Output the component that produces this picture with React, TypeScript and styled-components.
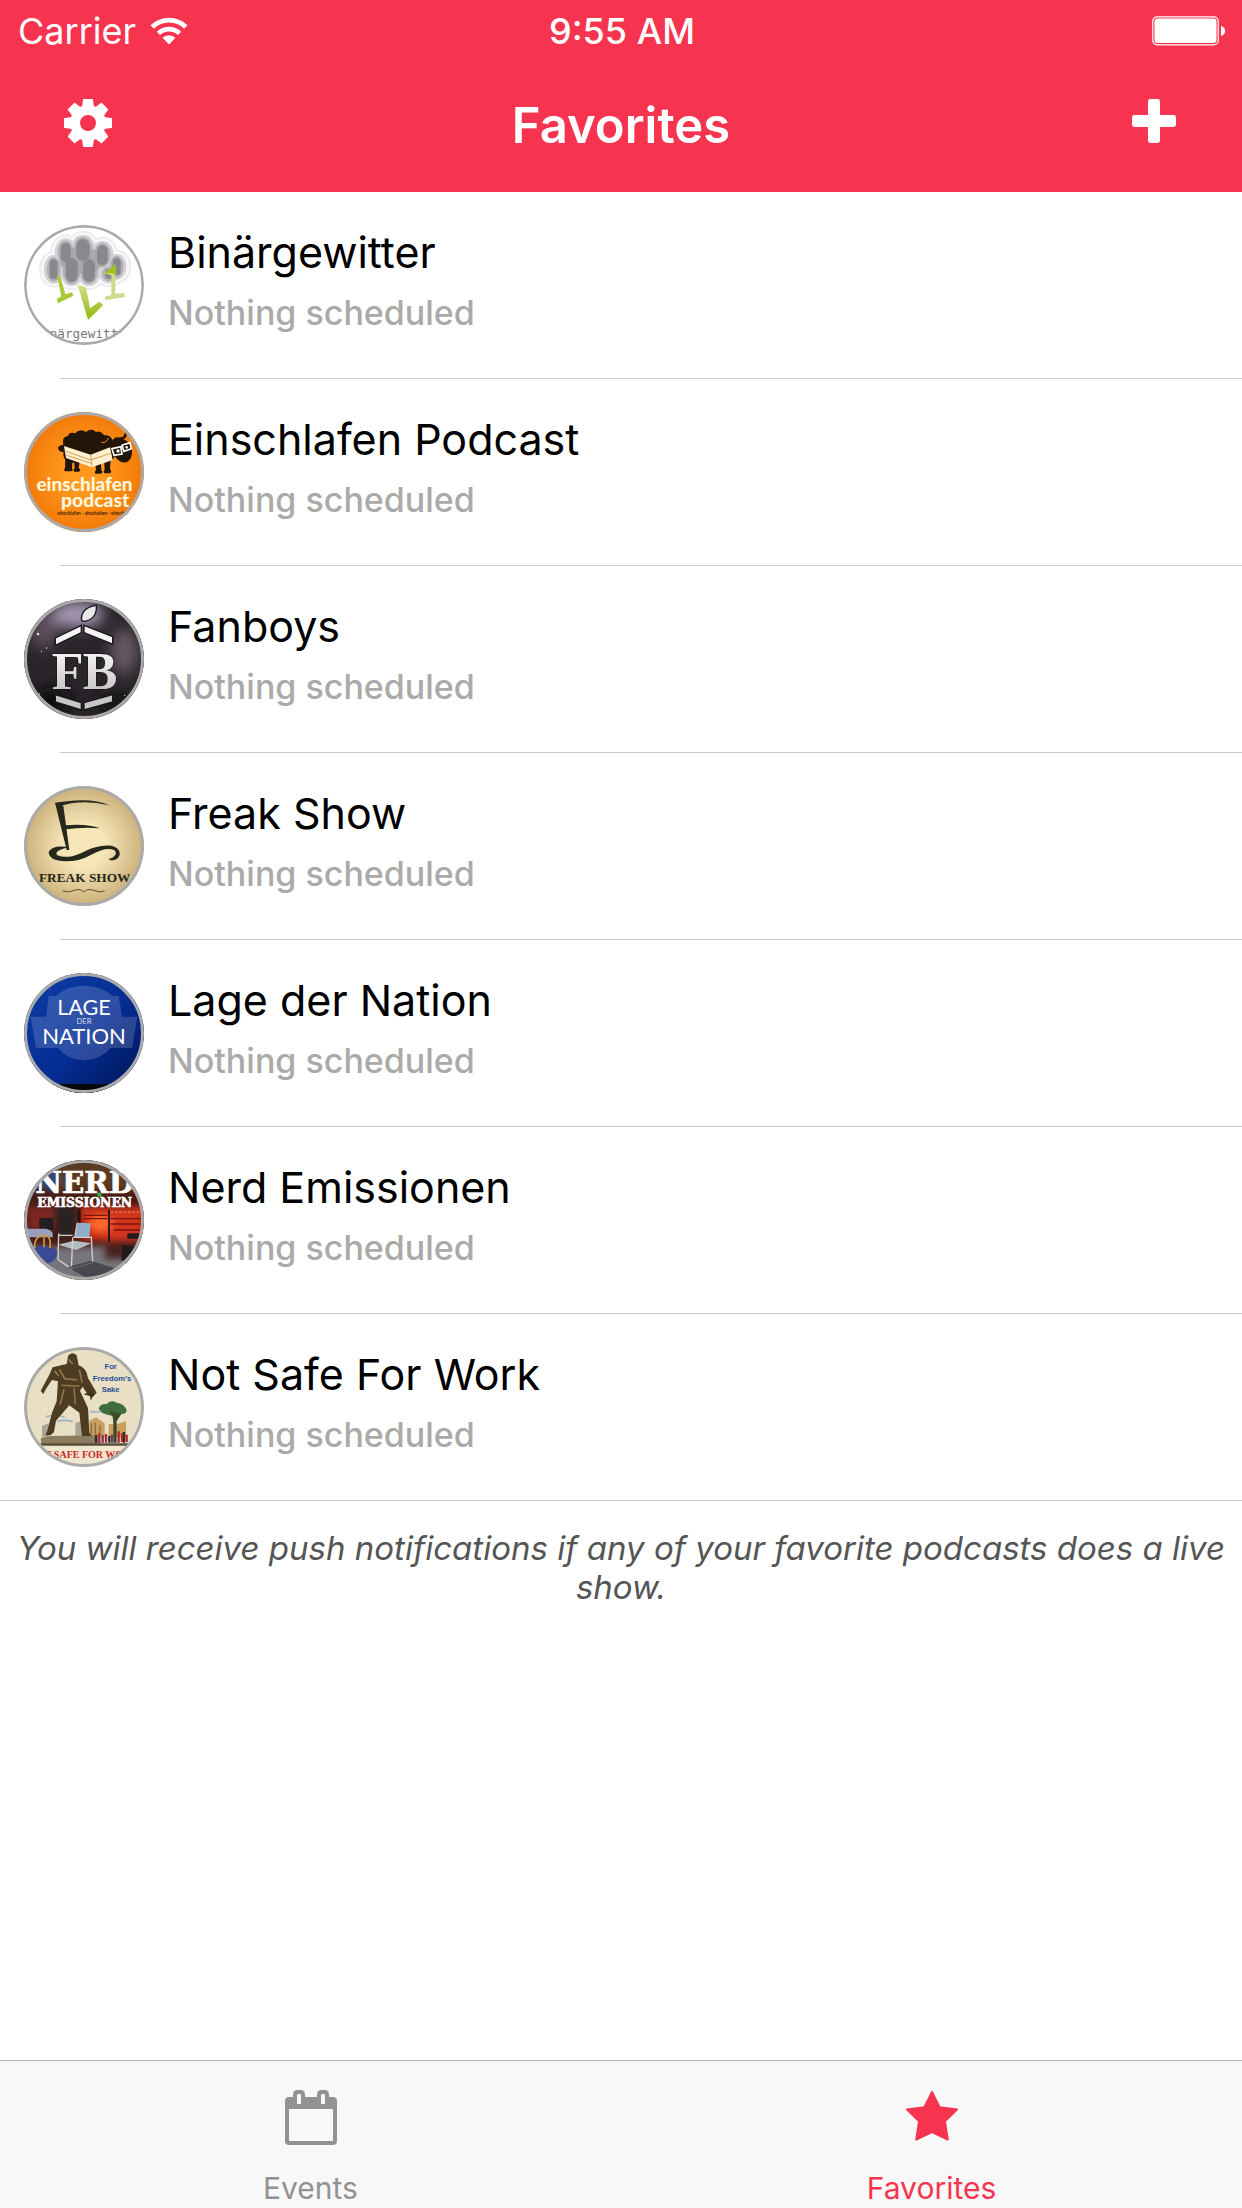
import React from "react";
import styled, { createGlobalStyle } from "styled-components";

const RED = "#f6344f";

const GlobalStyle = createGlobalStyle`
  *, *::before, *::after { box-sizing: border-box; }
  body {
    margin: 0;
    background: #ffffff;
    color: #000000;
    font-family: Inter, "Liberation Sans", sans-serif;
  }
`;

const Screen = styled.div`
  display: flex;
  flex-direction: column;
  min-height: 100vh;
`;

const Header = styled.header`
  background: ${RED};
  color: #ffffff;
`;

const StatusBar = styled.div`
  display: grid;
  grid-template-columns: 1fr auto 1fr;
  align-items: center;
  height: 60px;
  padding: 2px 16px 0 18px;
  font-size: 36px;
  line-height: 44px;
`;

const Carrier = styled.div`
  display: flex;
  align-items: center;
  gap: 14px;
`;

const Clock = styled.time`
  font-weight: 500;
`;

const BatterySlot = styled.div`
  display: flex;
  justify-content: flex-end;
`;

const NavBar = styled.div`
  display: flex;
  align-items: center;
  justify-content: space-between;
  height: 132px;
  padding: 0 52px 6px;
`;

const Title = styled.h1`
  margin: 0;
  padding-top: 6px;
  font-size: 49px;
  line-height: 60px;
  font-weight: 600;
`;

const IconButton = styled.button`
  display: flex;
  align-items: center;
  justify-content: center;
  width: 72px;
  height: 72px;
  padding: 0;
  border: 0;
  background: none;
  color: inherit;
  cursor: pointer;
`;

const Main = styled.main`
  flex: 1;
`;

const List = styled.ul`
  margin: 0;
  padding: 0;
  list-style: none;
  border-bottom: 1px solid #c8c7cc;
`;

const Row = styled.li`
  & + &::before {
    content: "";
    display: block;
    height: 1px;
    margin-left: 60px;
    background: #c8c7cc;
  }
`;

const RowBody = styled.div`
  display: flex;
  gap: 24px;
  padding: 33px 24px;
`;

const Avatar = styled.div`
  flex: none;
  width: 120px;
  height: 120px;
  border-radius: 50%;
  overflow: hidden;

  svg { display: block; width: 100%; height: 100%; }
`;

const RowText = styled.div`
  display: flex;
  flex-direction: column;
  gap: 12px;
`;

const Name = styled.h2`
  margin: 0;
  font-size: 43px;
  line-height: 54px;
  font-weight: 400;
`;

const Schedule = styled.p`
  margin: 0;
  color: #aaaaaa;
  font-size: 34px;
  line-height: 44px;
  font-weight: 500;
`;

const Note = styled.p`
  margin: 0;
  padding: 28px 8px;
  color: #555555;
  font-size: 33px;
  line-height: 39px;
  font-style: italic;
  text-align: center;
`;

const TabBar = styled.nav`
  display: grid;
  grid-template-columns: 1fr 1fr;
  height: 148px;
  border-top: 1px solid #b2b2b2;
  background: #f8f8f8;
`;

const Tab = styled.a<{ $active?: boolean }>`
  display: flex;
  flex-direction: column;
  align-items: center;
  gap: 24px;
  padding-top: 28px;
  color: ${(p) => (p.$active ? RED : "#929292")};
  font-size: 30px;
  line-height: 36px;
  text-decoration: none;
`;

const WifiIcon = () => (
  <svg width="38" height="28" viewBox="0 0 38 28" aria-hidden="true">
    <g fill="none" stroke="currentColor" strokeWidth="4.6">
      <path d="M2.2 10 A24 24 0 0 1 35.8 10" />
      <path d="M8.4 16.4 A15.4 15.4 0 0 1 29.6 16.4" />
    </g>
    <path d="M12.6 20.8 A9.2 9.2 0 0 1 25.4 20.8 L19 27.4 Z" fill="currentColor" />
  </svg>
);

const BatteryIcon = () => (
  <svg width="74" height="30" viewBox="0 0 74 30" aria-hidden="true">
    <rect x="0.8" y="0.8" width="65.4" height="28" rx="4.4" fill="none" stroke="#fff" strokeWidth="1.2" />
    <rect x="2.5" y="2.5" width="62" height="24.6" rx="3" fill="#fff" />
    <path d="M69 10 Q73 11 73 15 Q73 19 69 20 Z" fill="#fff" />
  </svg>
);

const GearIcon = () => (
  <svg width="48" height="48" viewBox="-24 -24 48 48" aria-hidden="true">
    <circle r="12.5" fill="none" stroke="currentColor" strokeWidth="9" />
    {[0, 45, 90, 135, 180, 225, 270, 315].map((a) => (
      <path
        key={a}
        transform={`rotate(${a})`}
        d="M-4.2 -24 H4.2 Q4.9 -24 5 -23.2 L5.8 -17.6 Q6.2 -16.6 7.4 -15.6 L4 -12 H-4 L-7.4 -15.6 Q-6.2 -16.6 -5.8 -17.6 L-5 -23.2 Q-4.9 -24 -4.2 -24 Z"
        fill="currentColor"
      />
    ))}
  </svg>
);

const PlusIcon = () => (
  <svg width="44" height="48" viewBox="0 0 44 48" aria-hidden="true">
    <rect x="16" width="12" height="44" rx="2.4" fill="currentColor" />
    <rect y="16" width="44" height="12" rx="2.4" fill="currentColor" />
  </svg>
);

const CalendarIcon = () => (
  <svg width="52" height="57" viewBox="0 0 52 57" aria-hidden="true">
    <path
      fill="currentColor"
      fillRule="evenodd"
      d="M4 8 H8 V6 Q8 1 12.500 1 H15.500 Q20 1 20 6 V8 H32 V6 Q32 1 36.500 1 H39.500 Q44 1 44 6 V8 H48 Q52 8 52 12 V52 Q52 56 48 56 H4 Q0 56 0 52 V12 Q0 8 4 8 Z M4 20 V52 H48 V20 Z M12 6 V14.500 Q12 15 12.500 15 H15.500 Q16 15 16 14.500 V6 Q16 5 15 5 H13 Q12 5 12 6 Z M36 6 V14.500 Q36 15 36.500 15 H39.500 Q40 15 40 14.500 V6 Q40 5 39 5 H37 Q36 5 36 6 Z"
    />
  </svg>
);

const StarIcon = () => (
  <svg width="52" height="57" viewBox="0 0 52 57" aria-hidden="true">
    <path
      d="M26 3 L33.600 18.200 L51 20.600 L38.900 32.400 L41.800 50.500 L26 43 L10.200 50.500 L13.100 32.400 L1 20.600 L18.400 18.200 Z"
      fill="currentColor"
      stroke="currentColor"
      strokeWidth="2"
      strokeLinejoin="round"
    />
  </svg>
);

const Ring = () => <circle cx="210" cy="210" r="175.500" fill="none" stroke="#aaaaaa" strokeWidth="9" />;

const PILLS = [
  [89, 133, 12, 30], [278, 125, 12, 26], [255, 147, 12, 15], [125, 82, 15, 29],
  [235, 90, 16, 30], [177, 75, 20, 33], [143, 135, 18, 36], [195, 137, 18, 34],
];

const StormCover = () => (
  <svg viewBox="0 0 360 360" aria-hidden="true">
    <defs>
      <linearGradient id="bolt" x1="0" y1="0" x2="0" y2="1">
        <stop offset="0" stopColor="#cfe08a" />
        <stop offset="1" stopColor="#8fb80c" />
      </linearGradient>
    </defs>
    <rect width="360" height="360" fill="#fff" />
    {PILLS.map(([x, y, rx, ry]) => (
      <ellipse key={`h${x}`} cx={x} cy={y} rx={rx + 32} ry={ry + 25} fill="#ededf0" />
    ))}
    {PILLS.map(([x, y, rx, ry]) => (
      <ellipse key={`w${x}`} cx={x} cy={y} rx={rx + 25} ry={ry + 19} fill="#fafafb" />
    ))}
    {PILLS.map(([x, y, rx, ry]) => (
      <ellipse key={`g${x}`} cx={x} cy={y} rx={rx + 18} ry={ry + 13} fill="#d3d3d7" />
    ))}
    {PILLS.map(([x, y, rx, ry]) => (
      <ellipse key={`m${x}`} cx={x} cy={y} rx={rx + 9} ry={ry + 7} fill="#b2b2b6" />
    ))}
    <ellipse cx="172" cy="106" rx="66" ry="40" fill="#a4a4a8" fillOpacity="0.8" />
    {PILLS.map(([x, y, rx, ry]) => (
      <rect key={`c${x}`} x={x - rx} y={y - ry} width={rx * 2} height={ry * 2} rx={rx} fill="#88888d" />
    ))}
    <path d="M98 148 L110 158 L124 208 L144 202 L148 212 L102 235 L98 222 L112 214 Z" fill="#a6c936" />
    <path d="M161 180 L186 187 L198 250 L226 230 L238 240 L192 285 Z" fill="url(#bolt)" />
    <path d="M274 118 V206 L300 204 L304 216 L244 226 L242 215 L262 210 L262 150 L240 146 Z" fill="#cadd8e" />
    <path d="M274 118 L276 150 L264 144 L240 146 Z" fill="#9cc41c" />
    <text x="180" y="340" textAnchor="middle" fontFamily="DejaVu Sans Mono, monospace" fontSize="38" fill="#77777b">Binärgewitter</text>
    <circle cx="180" cy="180" r="176" fill="none" stroke="#aaaaaa" strokeWidth="8" />
  </svg>
);

const SheepCover = () => (
  <svg viewBox="30 30 360 360" aria-hidden="true">
    <defs>
      <radialGradient id="orange">
        <stop offset="0.3" stopColor="#ff9a1e" />
        <stop offset="1" stopColor="#f37a08" />
      </radialGradient>
    </defs>
    <rect x="30" y="30" width="360" height="360" fill="url(#orange)" />
    <g fill="#241509">
      <path d="M148 128 Q142 104 162 102 Q166 88 184 94 Q198 78 216 90 Q232 76 246 90 Q260 84 270 100 Q290 98 296 116 L306 150 Q304 176 276 182 H168 Q146 174 148 150 Q132 150 132 136 Q138 128 148 128 Z" />
      <path d="M154 160 H176 L174 198 Q180 208 170 208 H154 Q147 204 153 198 Z M180 170 H198 L194 198 Q204 206 194 209 H180 Q176 204 182 198 Z M242 170 H260 L262 204 Q270 214 258 215 H244 Q240 210 246 204 Z M270 170 H290 L288 202 Q296 212 286 214 H272 Q266 210 272 204 Z" />
      <path d="M296 112 Q318 104 340 118 L354 140 Q356 172 338 181 Q316 184 304 164 L288 134 Z" />
    </g>
    <path d="M306 110 Q334 112 334 98 M292 128 Q264 138 260 118 Q264 102 282 106" fill="none" stroke="#241509" strokeWidth="8" strokeLinecap="round" />
    <path d="M262 120 Q272 128 284 108" fill="none" stroke="#f4931f" strokeWidth="3" />
    <path d="M150 132 L230 158 L288 136 L296 174 L234 196 L156 168 Z" fill="#fff0cf" />
    <path d="M230 158 L234 194 M156 148 L230 174 L290 154 M158 160 L232 184" fill="none" stroke="#d99a55" strokeWidth="3" />
    <path d="M294 140 L320 134 L324 156 L300 160 Z M324 130 L348 122 L352 140 L330 148 Z" fill="#241509" stroke="#fff" strokeWidth="5" />
    <circle cx="312" cy="147" r="5" fill="#fff" />
    <circle cx="338" cy="136" r="4" fill="#fff" />
    <g fontFamily="Lato, sans-serif" fontWeight="900" fill="#fff6dc" textAnchor="end">
      <text x="356" y="268" fontSize="57">einschlafen</text>
      <text x="346" y="314" fontSize="58">podcast</text>
    </g>
    <text x="130" y="338" fontFamily="Lato, sans-serif" fontWeight="700" fontSize="14" fill="#4a2608">einschlafen - abschalten - einschlafen</text>
    <Ring />
  </svg>
);

const NebulaCover = () => (
  <svg viewBox="30 33 360 360" aria-hidden="true">
    <defs>
      <filter id="mist" x="-50%" y="-50%" width="200%" height="200%">
        <feGaussianBlur stdDeviation="20" />
      </filter>
      <linearGradient id="steel" x1="0" y1="0" x2="0" y2="1">
        <stop offset="0" stopColor="#ffffff" />
        <stop offset="1" stopColor="#bcbcbc" />
      </linearGradient>
    </defs>
    <rect x="30" y="30" width="360" height="363" fill="#2b252b" />
    <g filter="url(#mist)">
      <ellipse cx="190" cy="80" rx="80" ry="40" fill="#a397b0" />
      <ellipse cx="90" cy="130" rx="40" ry="50" fill="#5d505c" />
      <ellipse cx="330" cy="190" rx="40" ry="70" fill="#665964" />
      <ellipse cx="110" cy="340" rx="70" ry="40" fill="#0e0c10" />
      <ellipse cx="310" cy="350" rx="70" ry="40" fill="#151218" />
    </g>
    <path d="M203 98 Q198 60 247 52 Q250 92 212 100 Z" fill="#e9e9e9" stroke="#17151a" strokeWidth="4" />
    <path d="M124 150 L202 112 V134 L124 172 Z M210 112 L296 146 V168 L210 134 Z" fill="#f4f4f4" stroke="#17151a" strokeWidth="4" />
    <path d="M124 342 L202 366 V344 L124 320 Z M210 366 L296 342 V320 L210 344 Z" fill="#c6c6c6" stroke="#17151a" strokeWidth="4" />
    <g fontFamily="Liberation Serif, serif" fontWeight="700" fill="url(#steel)" stroke="#17151a" strokeWidth="4" paintOrder="stroke" textAnchor="middle">
      <text x="161" y="302" fontSize="156">F</text>
      <text x="258" y="302" fontSize="156">B</text>
    </g>
    <g fill="#e6dde4">
      <circle cx="72" cy="138" r="4" />
      <circle cx="82" cy="190" r="2" />
      <circle cx="98" cy="180" r="2" />
      <circle cx="76" cy="318" r="2" />
      <circle cx="332" cy="322" r="2" />
    </g>
    <circle cx="210" cy="213" r="175.500" fill="none" stroke="#aaaaaa" strokeWidth="9" />
  </svg>
);

const HatCover = () => (
  <svg viewBox="30 30 360 360" aria-hidden="true">
    <defs>
      <radialGradient id="parchment">
        <stop offset="0.35" stopColor="#f7e6b9" />
        <stop offset="1" stopColor="#cbb079" />
      </radialGradient>
    </defs>
    <rect x="30" y="30" width="360" height="360" fill="url(#parchment)" />
    <g fill="#25281a">
      <path d="M123 80 L134 92 Q200 68 286 88 Q236 66 160 76 Q136 78 123 80 Z" />
      <path d="M123 80 L148 90 L166 222 L158 222 Z" />
      <path d="M154 148 Q220 142 258 157 Q208 152 156 160 Z" />
      <path d="M156 212 Q112 208 104 228 Q104 254 156 256 Q196 256 232 236 Q276 212 300 222 Q314 232 294 246 L284 248 Q288 256 302 252 Q322 244 316 226 Q306 204 262 210 Q234 214 204 230 Q160 250 130 238 Q118 226 156 216 Z" />
    </g>
    <text x="212" y="318" textAnchor="middle" fontFamily="Liberation Serif, serif" fontWeight="700" fontSize="40" fill="#25281a">FREAK SHOW</text>
    <path d="M146 345 Q164 352 184 342 Q200 338 209 348 Q218 338 236 342 Q256 352 272 345" fill="none" stroke="#5d5034" strokeWidth="3" />
    <Ring />
  </svg>
);

const NationCover = () => (
  <svg viewBox="30 33 360 360" aria-hidden="true">
    <defs>
      <linearGradient id="navy" x1="0" y1="0" x2="1" y2="1">
        <stop offset="0" stopColor="#0d3fa6" />
        <stop offset="0.55" stopColor="#052c92" />
        <stop offset="1" stopColor="#001450" />
      </linearGradient>
    </defs>
    <rect x="30" y="30" width="360" height="363" fill="url(#navy)" />
    <path d="M104 102 H126 Q160 70 210 71 Q260 70 296 102 H314 L324 164 H370 L354 258 H290 Q260 294 210 295 Q160 294 132 258 H66 L50 164 H96 Z" fill="#fff" fillOpacity="0.16" />
    <g fontFamily="Lato, sans-serif" fill="#fff" textAnchor="middle">
      <text x="210" y="159" fontSize="65">LAGE</text>
      <text x="210" y="185" fontSize="23" fillOpacity="0.8">DER</text>
      <text x="210" y="245" fontSize="66">NATION</text>
    </g>
    <rect x="30" y="366" width="360" height="30" fill="#06070c" />
    <circle cx="210" cy="213" r="175.500" fill="none" stroke="#aaaaaa" strokeWidth="9" />
  </svg>
);

const BarCover = () => (
  <svg viewBox="30 30 360 360" aria-hidden="true">
    <defs>
      <filter id="glow" x="-50%" y="-50%" width="200%" height="200%">
        <feGaussianBlur stdDeviation="9" />
      </filter>
    </defs>
    <rect x="30" y="30" width="360" height="360" fill="#4a1c16" />
    <g filter="url(#glow)">
      <path d="M30 30 H390 V120 H30 Z" fill="#5a3a22" />
      <ellipse cx="90" cy="90" rx="50" ry="30" fill="#2f4a74" />
      <path d="M200 170 H390 V270 H200 Z" fill="#d2351a" />
      <ellipse cx="262" cy="220" rx="34" ry="24" fill="#ff6a2c" />
      <path d="M40 170 H130 V240 H40 Z" fill="#7c2620" />
      <path d="M120 170 H190 V260 H120 Z" fill="#2a2322" />
      <path d="M30 290 H330 L370 390 H30 Z" fill="#77757c" />
      <path d="M270 270 H390 V330 H270 Z" fill="#4c241c" />
    </g>
    <path d="M76 204 H118 V240 H76 Z" fill="#241c20" />
    <path d="M190 176 H200 V240 H190 Z M282 180 H288 V276 H282 Z" fill="#2a1512" />
    <path d="M208 196 H280 M208 206 H380 M290 222 H384 M300 240 H384" stroke="#7a140c" strokeWidth="4" />
    <path d="M290 186 H384" stroke="#ff8a50" strokeWidth="3" strokeDasharray="8 5" />
    <path d="M40 236 H96 Q122 242 116 262 H42 Z" fill="#97a0bd" />
    <path d="M36 290 Q100 280 132 302 Q130 338 92 342 L56 330 Z" fill="#3c4a94" />
    <path d="M90 262 V292 M62 294 Q60 254 96 256 Q112 262 108 294" fill="none" stroke="#c99b50" strokeWidth="5" />
    <path d="M192 218 L230 220 L226 262 L182 264 Z" fill="#8fb0c8" />
    <path d="M132 284 L180 272 L232 280 L186 300 Z" fill="#b4bfc4" />
    <path d="M134 250 L132 330 M134 256 H176 M176 264 L172 358 M176 262 H232 L236 338 M190 218 L182 264 M134 330 L172 356 L236 338" fill="none" stroke="#d3d2cc" strokeWidth="4" />
    <path d="M326 284 L366 290 L340 340 L322 330 Z M340 250 H378 V266 H340 Z" fill="#221a1c" />
    <path d="M160 352 L230 332 L320 360 L220 384 Z" fill="#35343a" fillOpacity="0.7" />
    <circle cx="256" cy="134" r="7" fill="#3da83c" />
    <g fontFamily="DejaVu Serif, serif" fontWeight="700" fill="#fff" stroke="#fff" strokeWidth="2" textAnchor="middle">
      <text x="212" y="130" fontSize="88">NERD</text>
      <text x="212" y="172" fontSize="37">EMISSIONEN</text>
    </g>
    <Ring />
  </svg>
);

const StatueCover = () => (
  <svg viewBox="30 33 360 360" aria-hidden="true">
    <rect x="30" y="30" width="360" height="363" fill="#e9dfc4" />
    <path d="M96 242 Q130 234 152 244 M130 256 Q150 250 176 256 M228 226 Q250 230 262 226" fill="none" stroke="#9db4c0" strokeWidth="5" />
    <path d="M84 270 L104 262 V302 H84 Z M184 262 L206 252 V300 H184 Z" fill="#a9a493" />
    <path d="M226 254 L246 244 L272 262 V304 H226 Z M284 264 H310 L336 256 V304 H284 Z" fill="#c99f5f" />
    <path d="M232 262 V294 M244 260 V294 M258 268 V294" stroke="#8a6a40" strokeWidth="4" />
    <path d="M80 306 L110 300 L250 298 L262 324 H82 Z" fill="#8b7c5e" />
    <path d="M80 322 H342 V329 H80 Z" fill="#56503e" />
    <path d="M162 60 Q174 44 188 58 L194 88 Q218 96 222 126 L248 170 L236 184 L222 178 L206 152 L198 164 L222 216 L226 290 L234 300 H204 L196 230 L166 208 L126 254 L120 288 L110 298 H94 L100 284 L114 230 L128 196 L132 136 L114 132 L96 158 L88 174 L80 164 L106 116 L116 94 L158 84 Z" fill="#4d3c22" />
    <path d="M136 100 L152 128 L190 132 M142 148 L196 150 M150 160 L138 206 M180 156 L184 204 M122 104 L134 120 M196 100 L204 140 M164 70 L176 84" fill="none" stroke="#8f7748" strokeWidth="5" />
    <path d="M212 174 L238 178 M228 166 L232 190" stroke="#3a2c18" strokeWidth="5" />
    <path d="M254 218 Q258 202 278 204 Q290 190 308 200 Q330 202 338 222 Q338 236 318 234 L306 244 Q296 240 286 238 L266 232 Z" fill="#3f6b3d" />
    <path d="M286 226 Q298 236 298 262 V320 H308 V256 L322 234" fill="#3d4a28" />
    <g strokeWidth="7" fill="none">
      <path d="M246 296 V320 M286 300 V320 M330 288 V320" stroke="#2c2c38" />
      <path d="M256 292 V320 M276 294 V320 M314 286 V320 M324 292 V318 M338 296 V318" stroke="#b3262b" />
      <path d="M266 298 V320 M294 296 V320" stroke="#5e3f63" />
    </g>
    <g fontFamily="Liberation Sans, sans-serif" fontWeight="700" fontSize="23" fill="#1d4f96" textAnchor="middle">
      <text x="290" y="100">For</text>
      <text x="294" y="134">Freedom’s</text>
      <text x="290" y="168">Sake</text>
    </g>
    <rect x="30" y="330" width="360" height="63" fill="#f0e7cf" />
    <text x="210" y="366" textAnchor="middle" fontFamily="Liberation Serif, serif" fontWeight="700" fontSize="30" fill="#c62a2e">NOT SAFE FOR WORK</text>
    <circle cx="210" cy="213" r="175.500" fill="none" stroke="#aaaaaa" strokeWidth="9" />
  </svg>
);

const podcasts = [
  { name: "Binärgewitter", Cover: StormCover },
  { name: "Einschlafen Podcast", Cover: SheepCover },
  { name: "Fanboys", Cover: NebulaCover },
  { name: "Freak Show", Cover: HatCover },
  { name: "Lage der Nation", Cover: NationCover },
  { name: "Nerd Emissionen", Cover: BarCover },
  { name: "Not Safe For Work", Cover: StatueCover },
];

export default function App() {
  return (
    <Screen>
      <GlobalStyle />
      <Header>
        <StatusBar>
          <Carrier>
            Carrier
            <WifiIcon />
          </Carrier>
          <Clock>9:55 AM</Clock>
          <BatterySlot>
            <BatteryIcon />
          </BatterySlot>
        </StatusBar>
        <NavBar>
          <IconButton type="button" aria-label="Settings">
            <GearIcon />
          </IconButton>
          <Title>Favorites</Title>
          <IconButton type="button" aria-label="Add podcast">
            <PlusIcon />
          </IconButton>
        </NavBar>
      </Header>
      <Main>
        <List>
          {podcasts.map(({ name, Cover }) => (
            <Row key={name}>
              <RowBody>
                <Avatar>
                  <Cover />
                </Avatar>
                <RowText>
                  <Name>{name}</Name>
                  <Schedule>Nothing scheduled</Schedule>
                </RowText>
              </RowBody>
            </Row>
          ))}
        </List>
        <Note>You will receive push notifications if any of your favorite podcasts does a live show.</Note>
      </Main>
      <TabBar>
        <Tab href="#events">
          <CalendarIcon />
          Events
        </Tab>
        <Tab href="#favorites" $active aria-current="page">
          <StarIcon />
          Favorites
        </Tab>
      </TabBar>
    </Screen>
  );
}
